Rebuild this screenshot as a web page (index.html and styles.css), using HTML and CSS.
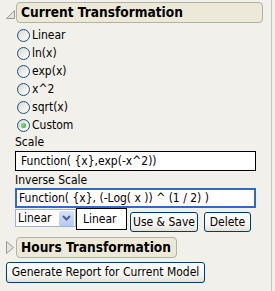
FILE: index.html
```html
<html>
<head>
<link rel="stylesheet" href="styles.css">
</head>
<body>
<div class="window">
	<div class="outline-head">
		<svg class="twisty" width="10" height="21" viewBox="0 0 10 21"><polygon points="8.5,8.5 8.5,16.5 0.5,16.5" fill="#e4e4e0" stroke="#9a9a9a"/></svg>
		<div class="head-box">Current Transformation</div>
	</div>
	<div class="outline-body">
		<div class="radios">
			<label class="radio"><span class="dot"></span>Linear</label>
			<label class="radio"><span class="dot"></span>ln(x)</label>
			<label class="radio"><span class="dot"></span>exp(x)</label>
			<label class="radio"><span class="dot"></span>x^2</label>
			<label class="radio"><span class="dot"></span>sqrt(x)</label>
			<label class="radio"><span class="dot on"></span>Custom</label>
		</div>
		<div class="field-label">Scale</div>
		<div class="textbox">Function( {x},exp(-x^2))</div>
		<div class="field-label inv">Inverse Scale</div>
		<div class="textbox focus">Function( {x}, (-Log( x )) ^ (1 / 2) )</div>
		<div class="tools">
			<div class="combo">
				<span class="combo-text">Linear</span>
				<span class="combo-btn"><svg width="9" height="6" viewBox="0 0 9 6"><polyline points="1,1 4.5,4.5 8,1" fill="none" stroke="#4d6185" stroke-width="2"/></svg></span>
			</div>
			<div class="name-box">Linear</div>
			<a href="#IGoNowhere" class="button save">Use &amp; Save</a>
			<a href="#IGoNowhere" class="button del">Delete</a>
		</div>
	</div>
	<div class="outline-head closed">
		<svg class="twisty" width="10" height="21" viewBox="0 0 10 21"><polygon points="0.5,4.5 7.5,10.5 0.5,16.5" fill="#e4e4e0" stroke="#9a9a9a"/></svg>
		<div class="head-box">Hours Transformation</div>
	</div>
	<a href="#IGoNowhere" class="button report">Generate Report for Current Model</a>
</div>
</body>
</html>
```

FILE: styles.css
```css
	body {
		margin: 0;
		background: #f1f0ea;
		font-family: "DejaVu Sans Condensed", "DejaVu Sans", sans-serif;
		font-size: 12px;
		color: #000;
	}
	.window {
		width: 272px;
		height: 291px;
		border-right: 1px solid #c9c7bd;
		padding: 2px 0 0 6px;
		box-sizing: border-box;
	}
	.outline-head {
		display: flex;
		align-items: flex-start;
		height: 21px;
	}
	.twisty {
		flex: none;
	}
	.head-box {
		width: 247px;
		height: 21px;
		box-sizing: border-box;
		border: 1px solid #b3b0a4;
		border-radius: 4px;
		background: #ece9d8;
		font-weight: bold;
		font-size: 13.6px;
		line-height: 19px;
		padding-left: 4px;
		white-space: nowrap;
	}
	.closed {
		margin-top: 5px;
	}
	.closed .head-box {
		width: 161px;
	}
	.outline-body {
		padding-left: 9px;
		width: 241px;
	}
	.radios {
		padding-top: 3px;
	}
	.radio {
		display: flex;
		align-items: center;
		height: 18px;
		padding-left: 2px;
	}
	.dot {
		width: 13px;
		height: 13px;
		box-sizing: border-box;
		border: 1px solid #1c5180;
		border-radius: 50%;
		background: linear-gradient(135deg, #d8d8d0, #ffffff);
		margin-right: 2px;
		display: flex;
		align-items: center;
		justify-content: center;
	}
	.dot.on::after {
		content: "";
		width: 5px;
		height: 5px;
		border-radius: 50%;
		background: radial-gradient(circle at 40% 40%, #8de08d, #21a121);
	}
	.field-label {
		line-height: 17px;
		height: 17px;
	}
	.field-label.inv {
		margin-top: 1px;
		height: 16px;
		line-height: 17px;
	}
	.textbox {
		height: 20px;
		box-sizing: border-box;
		border: 1px solid #000;
		background: #fff;
		line-height: 18px;
		padding-left: 5px;
		white-space: nowrap;
		overflow: hidden;
	}
	.textbox.focus {
		border: 2px solid #316ac5;
		line-height: 16px;
		padding-left: 2px;
	}
	.tools {
		display: flex;
		align-items: flex-start;
	}
	.combo {
		margin-top: 1px;
		width: 61px;
		height: 18px;
		box-sizing: border-box;
		border: 1px solid #9fb3cc;
		background: #fff;
		display: flex;
		align-items: center;
	}
	.combo-text {
		flex: 1;
		padding-left: 2px;
	}
	.combo-btn {
		width: 15px;
		height: 15px;
		margin-right: 1px;
		border-radius: 2px;
		background: linear-gradient(#d6e2fc, #b4c8f6);
		display: flex;
		align-items: center;
		justify-content: center;
	}
	.name-box {
		width: 51px;
		height: 22px;
		box-sizing: border-box;
		border: 1px solid #000;
		background: #fff;
		line-height: 20px;
		padding-left: 6px;
	}
	.button {
		display: inline-block;
		box-sizing: border-box;
		height: 20px;
		border: 1px solid #003c74;
		border-radius: 3px;
		background: linear-gradient(#ffffff, #f3f3ee 70%, #e2e0d6);
		color: #000;
		text-decoration: none;
		text-align: center;
		line-height: 18px;
		white-space: nowrap;
	}
	.save {
		margin: 4px 0 0 3px;
		width: 68px;
	}
	.del {
		margin: 4px 0 0 6px;
		width: 47px;
	}
	.report {
		display: block;
		margin-top: 4px;
		width: 199px;
		height: 21px;
		line-height: 19px;
	}
```
